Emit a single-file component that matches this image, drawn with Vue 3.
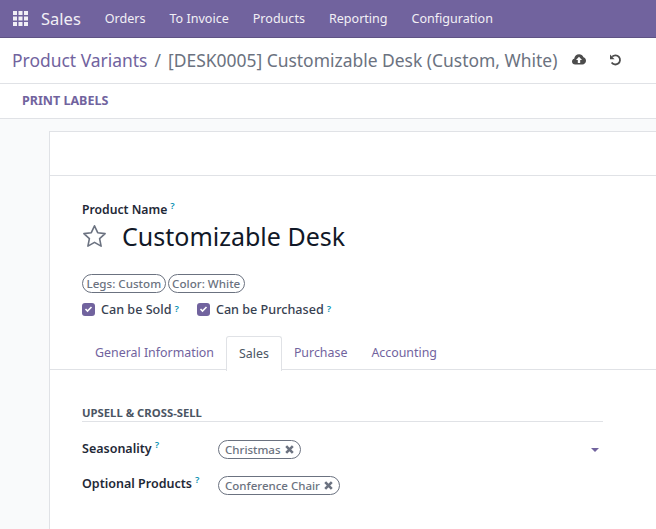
<script setup>
const menus = ['Orders', 'To Invoice', 'Products', 'Reporting', 'Configuration']
const tabs = ['General Information', 'Sales', 'Purchase', 'Accounting']
</script>

<template>
  <div class="app">
    <nav class="nav">
      <svg class="grid" width="15" height="15" viewBox="0 0 15 15" fill="#f1eff5">
        <rect x="0" y="0" width="4" height="4"/><rect x="5.5" y="0" width="4" height="4"/><rect x="11" y="0" width="4" height="4"/>
        <rect x="0" y="5.5" width="4" height="4"/><rect x="5.5" y="5.5" width="4" height="4"/><rect x="11" y="5.5" width="4" height="4"/>
        <rect x="0" y="11" width="4" height="4"/><rect x="5.5" y="11" width="4" height="4"/><rect x="11" y="11" width="4" height="4"/>
      </svg>
      <span class="brand">Sales</span>
      <span v-for="m in menus" :key="m" class="menu">{{ m }}</span>
    </nav>
    <header class="crumbs">
      <span class="link">Product Variants</span>
      <span class="sep">/</span>
      <span class="cur">[DESK0005] Customizable Desk (Custom, White)</span>
      <svg class="cloud" width="14" height="11" viewBox="0 0 14 11">
        <path fill="#4c4c4c" d="M3.2 10.5C1.4 10.5 0 9.2 0 7.5 0 6.1.9 5 2.2 4.7 2.4 2.400 4.500.3 7.100.3c2 0 3.700 1.200 4.400 3C13 3.700 14 5.100 14 6.800c0 2-1.600 3.700-3.600 3.700z"/>
        <path fill="#fff" d="M7 2.800 10 6H8.200v3H5.800V6H4z"/>
      </svg>
      <svg class="undo" width="13" height="12" viewBox="0 0 13 12" fill="none">
        <path stroke="#4c4c4c" stroke-width="1.800" d="M3.200 2.600A4.600 4.600 0 1 1 2.600 8.500"/>
        <path fill="#4c4c4c" d="M1 .6v4.600h4.600z"/>
      </svg>
    </header>
    <div class="actions"><span class="print">PRINT LABELS</span></div>
    <main class="content">
      <section class="sheet">
        <div class="strip"></div>
        <div class="body">
          <div class="name-label">Product Name<sup class="help">?</sup></div>
          <div class="title-row">
            <svg class="star" width="25" height="24" viewBox="0 0 25 24" fill="none">
              <path stroke="#6b7280" stroke-width="1.600" stroke-linejoin="round" d="M12.500 1.800l3.200 6.900 7.400.9-5.500 5.100 1.500 7.400-6.600-3.700-6.600 3.700 1.500-7.400L1.900 9.600l7.400-.9z"/>
            </svg>
            <h1 class="title">Customizable Desk</h1>
          </div>
          <div class="pills">
            <span class="pill">Legs: Custom</span>
            <span class="pill">Color: White</span>
          </div>
          <div class="checks">
            <label class="check first">
              <span class="box"><svg width="9" height="8" viewBox="0 0 9 8" fill="none"><path stroke="#fff" stroke-width="1.600" d="M1.500 4l2 2 4-4"/></svg></span>
              Can be Sold<sup class="help">?</sup>
            </label>
            <label class="check">
              <span class="box"><svg width="9" height="8" viewBox="0 0 9 8" fill="none"><path stroke="#fff" stroke-width="1.600" d="M1.500 4l2 2 4-4"/></svg></span>
              Can be Purchased<sup class="help">?</sup>
            </label>
          </div>
        </div>
        <div class="tabs">
          <span v-for="t in tabs" :key="t" class="tab" :class="{ active: t === 'Sales' }">{{ t }}</span>
        </div>
        <div class="pane">
          <h2 class="group">UPSELL &amp; CROSS-SELL</h2>
          <div class="field seasonality">
            <span class="flabel">Seasonality<sup class="help">?</sup></span>
            <span class="value">
              <span class="tag">Christmas<svg class="x" width="9" height="9" viewBox="0 0 9 9" fill="none"><path stroke="#6b7280" stroke-width="2.600" d="M1.200 1.200l6.600 6.600M7.800 1.200L1.200 7.800"/></svg></span>
              <span class="caret"></span>
            </span>
          </div>
          <div class="field optional">
            <span class="flabel">Optional Products<sup class="help">?</sup></span>
            <span class="value">
              <span class="tag">Conference Chair<svg class="x" width="9" height="9" viewBox="0 0 9 9" fill="none"><path stroke="#6b7280" stroke-width="2.600" d="M1.200 1.200l6.600 6.600M7.800 1.200L1.200 7.800"/></svg></span>
            </span>
          </div>
        </div>
      </section>
    </main>
  </div>
</template>

<style>
html, body { margin: 0; overflow: hidden; }
</style>

<style scoped>
.app {
  width: 656px; height: 529px; overflow: hidden; display: flex; flex-direction: column;
  font-family: "Noto Sans", "Open Sans", sans-serif; font-size: 13px; color: #4b5563; background: #fff;
}
.nav {
  height: 37px; flex: none; display: flex; align-items: center; background: #71639e;
  border-bottom: 1px solid #5f5384; color: #f1eff5; padding-left: 13px;
}
.grid { margin-right: 13px; }
.brand { font-size: 16.5px; margin-right: 24px; }
.menu { font-size: 12.55px; margin-right: 24px; }
.crumbs {
  height: 46px; flex: none; display: flex; align-items: center; padding: 0 0 2px 12px;
  border-bottom: 1px solid #e0e2e6; font-size: 17.45px; box-sizing: border-box;
}
.link { color: #71639e; }
.sep { margin: 0 7px; color: #6b7280; }
.cur { color: #6b7280; }
.cloud { margin-left: 15px; }
.undo { margin-left: 23px; }
.actions {
  height: 35px; flex: none; display: flex; align-items: center; padding: 0 0 1px 22px;
  border-bottom: 1px solid #e0e2e6; box-sizing: border-box;
}
.print { font-weight: 700; font-size: 12.500px; color: #71639e; }
.content { flex: 1; background: #f9fafb; padding: 12px 0 0 49px; min-height: 0; }
.sheet { background: #fff; border: 1px solid #e0e2e6; border-right: 0; height: 500px; }
.strip { height: 43px; border-bottom: 1px solid #e0e2e6; }
.body { padding: 26px 0 0 32px; }
.name-label { font-size: 12.2px; font-weight: 600; color: #1f2937; line-height: 16px; }
.help { font-size: 9.500px; color: #0891b2; font-weight: 600; line-height: 0; margin-left: 3px; vertical-align: 5px; }
.title-row { display: flex; align-items: center; height: 37px; margin-top: -1px; }
.star { margin-right: 15px; }
.title { margin: 0; font-size: 25px; font-weight: 400; color: #111827; }
.pills { display: flex; gap: 2px; margin-top: 20px; }
.pill, .tag {
  border: 1px solid #6b7280; border-radius: 10px; height: 17px; line-height: 17px;
  padding: 0 3.500px; font-size: 11.600px; color: #6b7280; font-weight: 500; display: inline-block;
}
.checks { display: flex; margin-top: 6px; height: 20px; align-items: center; }
.check { display: flex; align-items: center; font-size: 12.6px; font-weight: 500; color: #374151; }
.check.first { margin-right: 18px; }
.box {
  width: 13px; height: 13px; border-radius: 3px; background: #71639e; margin-right: 6px;
  display: flex; align-items: center; justify-content: center;
}
.tabs { display: flex; height: 33px; margin-top: 17px; border-bottom: 1px solid #e0e2e6; padding-left: 33px; }
.tab { padding: 0 12px; line-height: 33px; font-size: 12.400px; color: #71639e; }
.tab.active {
  background: #fff; color: #4b5563; border: 1px solid #e0e2e6; border-bottom: 0;
  border-radius: 3px 3px 0 0; height: 33px; margin-bottom: -1px; padding-bottom: 1px;
}
.pane { padding: 35px 53px 0 32px; }
.group { margin: 0; font-size: 11.300px; font-weight: 700; color: #4b5563; border-bottom: 1px solid #e0e2e6; line-height: 15px; padding-bottom: 1px; }
.field { display: flex; height: 35px; align-items: center; }
.seasonality { margin-top: 10px; }
.flabel { width: 136px; flex: none; font-size: 12.5px; font-weight: 600; color: #1f2937; margin-bottom: 2px; }
.value { flex: 1; display: flex; align-items: center; justify-content: space-between; }
.optional .value { padding-top: 2px; }
.tag { padding: 0 6px; font-size: 11.500px; }
.x { margin-left: 4px; }
.caret { width: 0; height: 0; border: 4px solid transparent; border-top-color: #71639e; border-bottom: 0; margin-right: 4px; }
</style>
